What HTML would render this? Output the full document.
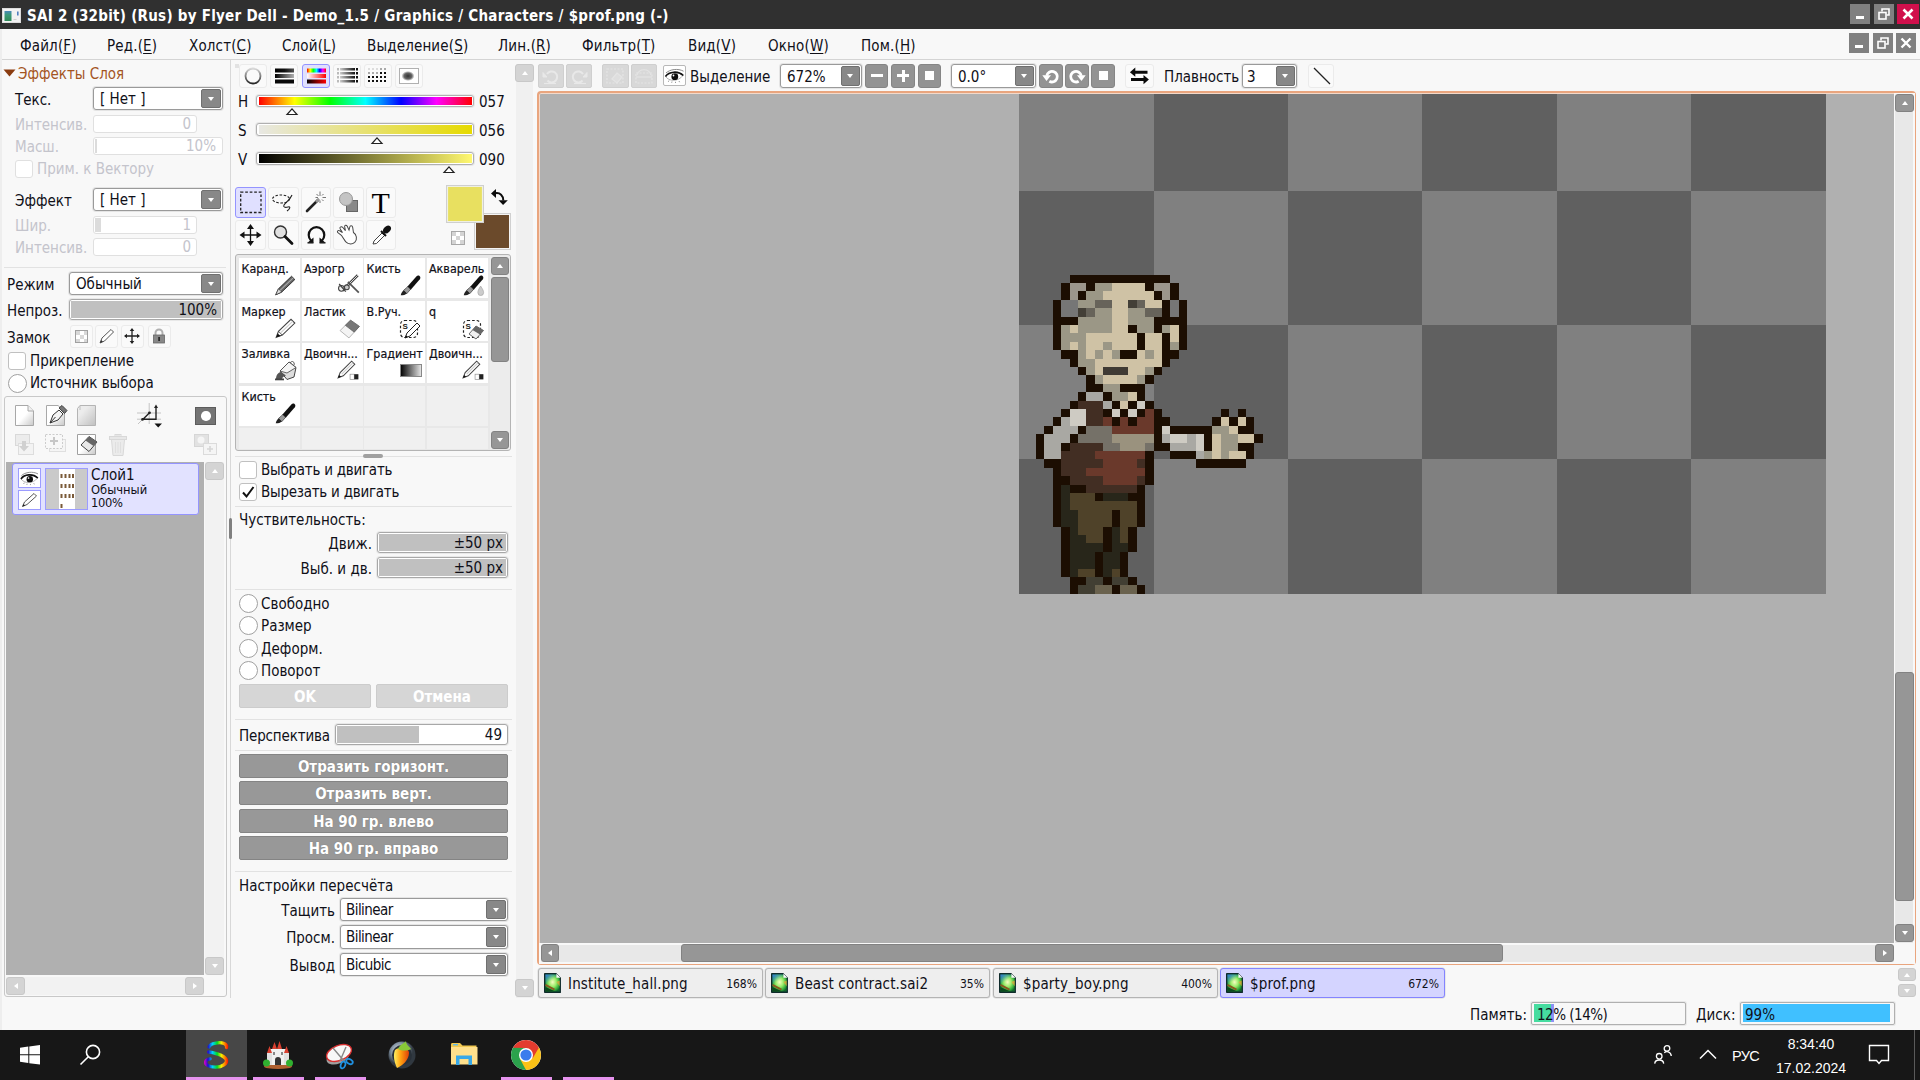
<!DOCTYPE html>
<html lang="ru"><head><meta charset="utf-8"><title>SAI 2</title>
<style>
*{box-sizing:border-box;margin:0;padding:0}
html,body{width:1920px;height:1080px;overflow:hidden;background:#f8f8f8}
body{position:relative;font-family:"DejaVu Sans Condensed","DejaVu Sans","Liberation Sans",sans-serif;font-stretch:condensed;font-size:15px;color:#101018;line-height:1}
.a{position:absolute}
.t{position:absolute;white-space:nowrap;line-height:18px;height:18px}
.r{text-align:right}
.m{letter-spacing:0.15px}
.dis{color:#c4c4cc}
.sm{font-size:12.8px;line-height:14px;height:14px}
.dd{position:absolute;background:#fff;border:1px solid #9a9a9a;border-radius:3px;box-shadow:0 0 0 1px #e4e4e4}
.ddb{position:absolute;background:#888;border:1px solid #707070;border-radius:2px}
.ddb:after{content:"";position:absolute;left:50%;top:50%;margin:-2px 0 0 -3.5px;border:3.5px solid transparent;border-top:4.500px solid #fff;border-bottom:0}
.sl{position:absolute;background:#fff;border:1px solid #a8a8a8;border-radius:3px;box-shadow:0 0 0 1px #e8e8e8}
.sld{position:absolute;background:#fff;border:1px solid #e0e0e0;border-radius:3px}
.fill{position:absolute;background:#c0c0c0}
.hl{position:absolute;height:1px;background:#e2e2e2}
.cb{position:absolute;width:18px;height:18px;background:#fff;border:1px solid #c0c0c0;border-radius:3px}
.rb{position:absolute;width:19px;height:19px;background:#fff;border:1px solid #a0a0a0;border-radius:50%}
.lb{position:absolute;border:1px solid #ebebeb;border-radius:3px;background:#fafafa}
.gb{position:absolute;background:#939393;border:1px solid #858585;border-radius:3px}
.db{position:absolute;background:#d8d8d8;border:1px solid #cfcfcf;border-radius:2px}
.btn{position:absolute;background:#989898;border:1px solid #848484;border-radius:2px;color:#fff;font-weight:bold;text-align:center;font-size:15px;line-height:24px;text-shadow:0 0 1px #707070}
.sbb{position:absolute;background:#d4d4d4;border:1px solid #c8c8c8;border-radius:3px}
.sbd{position:absolute;background:#969696;border:1px solid #828282;border-radius:3px}
.sbb,.sbd{display:flex;align-items:center;justify-content:center}
.tri{width:0;height:0;border:3.5px solid transparent}
.tu{border-bottom:4px solid #fff;border-top:0}
.td{border-top:4px solid #fff;border-bottom:0}
.tl{border-right:4px solid #fff;border-left:0}
.tr{border-left:4px solid #fff;border-right:0}
.cell{position:absolute;width:61px;height:40px;background:#fff;font-size:12.4px}
.cell span{position:absolute;left:2.5px;top:4px;line-height:14px;white-space:nowrap;-webkit-text-stroke:0.2px #101018}
.cell svg{position:absolute;right:2px;bottom:2px}
.ecell{position:absolute;width:61px;background:#f0f0f0}
.tab{position:absolute;top:968px;height:30px;width:225px;background:#eeeeee;border:1px solid #b4b4b4;border-radius:3px;box-shadow:0 0 0 0.5px #d8d8d8}
.tab .n{position:absolute;left:29px;top:6px;line-height:18px;letter-spacing:0.15px}
.tab .p{position:absolute;right:5px;top:8px;font-size:12px;line-height:14px}
.tab svg{position:absolute;left:5px;top:4px}
u{text-decoration:underline;text-underline-offset:2px}
</style></head><body>
<!-- title bar -->
<div class="a" style="left:0;top:0;width:1920px;height:28.700px;background:#303030;z-index:2"></div>
<svg class="a" style="left:2px;top:8px;z-index:3" width="19" height="15" viewBox="0 0 19 15"><defs><linearGradient id="ti" x1="0" y1="0" x2="0" y2="1"><stop offset="0" stop-color="#4a88b8"/><stop offset="0.400" stop-color="#3a9a78"/><stop offset="1" stop-color="#2f8a58"/></linearGradient></defs><rect x="0.500" y="0.500" width="18" height="14" fill="#f2f2f2" stroke="#dcdcdc"/><rect x="2.500" y="3" width="7" height="10" fill="url(#ti)"/><rect x="15" y="3.500" width="1.600" height="4" fill="#5080c0"/><rect x="11.500" y="11" width="3" height="1" fill="#d0d0d0"/></svg>
<div class="t" id="ttl" style="left:27px;top:5.500px;z-index:3;color:#fff;font-weight:bold;font-size:15px;line-height:20px;height:20px;letter-spacing:0.26px">SAI 2 (32bit) (Rus) by Flyer Dell - Demo_1.5 / Graphics / Characters / $prof.png (-)</div>
<div class="a" style="left:1850px;top:4px;width:20px;height:20px;background:#808080;z-index:3"><div class="a" style="left:6px;top:12px;width:8px;height:3px;background:#fff"></div></div>
<div class="a" style="left:1874px;top:4px;width:20px;height:20px;background:#808080;z-index:3"><svg class="a" style="left:4px;top:4px" width="12" height="12" viewBox="0 0 12 12" fill="none" stroke="#fff" stroke-width="1.6"><path d="M4 3.5V1H11V7H8.5"/><rect x="1" y="4.5" width="7" height="6.5"/></svg></div>
<div class="a" style="left:1897px;top:4px;width:22px;height:20px;background:#d0104c;z-index:3"><svg class="a" style="left:5px;top:4px" width="12" height="12" viewBox="0 0 12 12" stroke="#fff" stroke-width="2.6"><path d="M1.5 1.5L10.5 10.5M10.5 1.5L1.5 10.5"/></svg></div>
<!-- menu bar -->
<div class="a" style="left:0;top:28px;width:1920px;height:32px;background:#f8f8f8;border-bottom:1px solid #d4d4d4"></div>
<div class="a" style="left:0;top:28px;width:2px;height:1002px;background:#eeeeee"></div>
<div class="t m" style="top:37px;left:20px">Файл(<u>F</u>)</div>
<div class="t m" style="top:37px;left:107px">Ред.(<u>E</u>)</div>
<div class="t m" style="top:37px;left:189px">Холст(<u>C</u>)</div>
<div class="t m" style="top:37px;left:282px">Слой(<u>L</u>)</div>
<div class="t m" style="top:37px;left:367px">Выделение(<u>S</u>)</div>
<div class="t m" style="top:37px;left:498px">Лин.(<u>R</u>)</div>
<div class="t m" style="top:37px;left:582px">Фильтр(<u>T</u>)</div>
<div class="t m" style="top:37px;left:688px">Вид(<u>V</u>)</div>
<div class="t m" style="top:37px;left:768px">Окно(<u>W</u>)</div>
<div class="t m" style="top:37px;left:861px">Пом.(<u>H</u>)</div>
<div class="a" style="left:1849px;top:33px;width:20px;height:20px;background:#808080"><div class="a" style="left:6px;top:12px;width:8px;height:3px;background:#fff"></div></div>
<div class="a" style="left:1873px;top:33px;width:20px;height:20px;background:#808080"><svg class="a" style="left:4px;top:4px" width="12" height="12" viewBox="0 0 12 12" fill="none" stroke="#fff" stroke-width="1.6"><path d="M4 3.5V1H11V7H8.5"/><rect x="1" y="4.5" width="7" height="6.5"/></svg></div>
<div class="a" style="left:1896px;top:33px;width:20px;height:20px;background:#808080"><svg class="a" style="left:4px;top:4px" width="12" height="12" viewBox="0 0 12 12" stroke="#fff" stroke-width="2.4"><path d="M1.5 1.5L10.5 10.5M10.5 1.5L1.5 10.5"/></svg></div>
<!-- left panel -->
<div class="a" style="left:230px;top:60px;width:1px;height:938px;background:#d8d8d8"></div>
<div class="a" style="left:229px;top:518px;width:3px;height:21px;background:#808080;border-radius:1.5px"></div>
<svg class="a" style="left:3px;top:69px" width="13" height="8" viewBox="0 0 13 8"><path d="M0.5 0.5H12.5L6.5 7.5Z" fill="#8a3c10"/></svg>
<div class="t" style="left:18px;top:65px;color:#a4551f">Эффекты Слоя</div>
<div class="t" style="left:15px;top:91px">Текс.</div>
<div class="dd" style="left:93px;top:87px;width:130px;height:23px"></div><div class="ddb" style="left:201px;top:89px;width:20px;height:19px"></div>
<div class="t" style="left:100px;top:90px">[ Нет ]</div>
<div class="t dis" style="left:15px;top:116px">Интенсив.</div>
<div class="sld" style="left:93px;top:115px;width:104px;height:18px"></div>
<div class="t dis r" style="left:140px;width:51px;top:115px">0</div>
<div class="t dis" style="left:15px;top:138px">Масш.</div>
<div class="sld" style="left:93px;top:137px;width:130px;height:18px"></div><div class="fill" style="left:95px;top:139px;width:2px;height:14px;background:#dcdcdc"></div>
<div class="t dis r" style="left:160px;width:56px;top:137px">10%</div>
<div class="cb" style="left:15px;top:160px;border-color:#e0e0e0"></div>
<div class="t dis" style="left:37px;top:160px">Прим. к Вектору</div>
<div class="t" style="left:15px;top:192px">Эффект</div>
<div class="dd" style="left:93px;top:188px;width:130px;height:23px"></div><div class="ddb" style="left:201px;top:190px;width:20px;height:19px"></div>
<div class="t" style="left:100px;top:191px">[ Нет ]</div>
<div class="t dis" style="left:15px;top:217px">Шир.</div>
<div class="sld" style="left:93px;top:216px;width:104px;height:18px"></div><div class="fill" style="left:95px;top:218px;width:6px;height:14px;background:#dcdcdc"></div>
<div class="t dis r" style="left:140px;width:51px;top:216px">1</div>
<div class="t dis" style="left:15px;top:239px">Интенсив.</div>
<div class="sld" style="left:93px;top:238px;width:104px;height:18px"></div>
<div class="t dis r" style="left:140px;width:51px;top:238px">0</div>
<div class="hl" style="left:4px;top:267px;width:222px"></div>
<div class="t" style="left:7px;top:276px">Режим</div>
<div class="dd" style="left:69px;top:272px;width:154px;height:23px"></div><div class="ddb" style="left:201px;top:274px;width:20px;height:19px"></div>
<div class="t" style="left:76px;top:275px">Обычный</div>
<div class="t" style="left:7px;top:302px">Непроз.</div>
<div class="sl" style="left:69px;top:299px;width:154px;height:21px"></div><div class="fill" style="left:71px;top:301px;width:150px;height:17px"></div>
<div class="t r" style="left:150px;width:67px;top:301px">100%</div>
<div class="t" style="left:7px;top:329px">Замок</div>
<div class="lb" style="left:69.5px;top:324.7px;width:23px;height:23px"><svg width="20" height="20" viewBox="0 0 20 20"><rect x="4.5" y="4.5" width="12" height="12" fill="#fff" stroke="#a0a0a0"/><rect x="5" y="5" width="4" height="4" fill="#d8d8d8"/><rect x="13" y="5" width="3" height="4" fill="#d8d8d8"/><rect x="9" y="9" width="4" height="4" fill="#d8d8d8"/><rect x="5" y="13" width="4" height="3" fill="#d8d8d8"/><rect x="13" y="13" width="3" height="3" fill="#d8d8d8"/></svg></div>
<div class="lb" style="left:95.3px;top:324.7px;width:23px;height:23px"><svg width="20" height="20" viewBox="0 0 20 20"><path d="M4 17L6 12L15 3.5L17.5 6L8.5 15Z" fill="#fff" stroke="#555" stroke-width="1"/><path d="M4 17L5.2 14L7 15.8Z" fill="#333"/></svg></div>
<div class="lb" style="left:121.3px;top:324.7px;width:23px;height:23px"><svg width="20" height="20" viewBox="0 0 20 20" stroke="#222" stroke-width="1.3" fill="#222"><path d="M10 3V17M3 10H17" fill="none"/><path d="M10 2L12.3 5H7.7ZM10 18L12.3 15H7.7ZM2 10L5 7.7V12.3ZM18 10L15 7.7V12.3Z" stroke="none"/></svg></div>
<div class="lb" style="left:147.5px;top:324.7px;width:23px;height:23px"><svg width="20" height="20" viewBox="0 0 20 20"><path d="M6.5 9V7a3.5 3.5 0 0 1 7 0V9" fill="none" stroke="#b0b0b0" stroke-width="2"/><rect x="4.5" y="9" width="11" height="8" fill="#888" stroke="#666" stroke-width="0.8"/><rect x="9.3" y="11" width="1.6" height="4" fill="#222"/></svg></div>
<div class="cb" style="left:8px;top:352px"></div>
<div class="t" style="left:30px;top:352px">Прикрепление</div>
<div class="rb" style="left:7.5px;top:374px"></div>
<div class="t" style="left:30px;top:374px">Источник выбора</div>
<!-- layer panel -->
<div class="a" style="left:4px;top:396px;width:223px;height:601px;border:1px solid #c8c8c8;border-radius:3px;background:#f8f8f8"></div>
<svg class="a" style="left:14px;top:404px" width="22" height="24" viewBox="0 0 22 24"><defs><linearGradient id="pg" x1="0" y1="0" x2="1" y2="1"><stop offset="0.5" stop-color="#fff"/><stop offset="1" stop-color="#c8c8c8"/></linearGradient></defs><path d="M1.5 1.5H14L19.5 7V21.5H1.5Z" fill="url(#pg)" stroke="#a8a8a8"/><path d="M14 1.5V7H19.5" fill="#f0f0f0" stroke="#a8a8a8"/></svg>
<svg class="a" style="left:45px;top:404px" width="24" height="24" viewBox="0 0 24 24"><path d="M1.5 1.5H13L19.5 7V21.5H1.5Z" fill="url(#pg)" stroke="#a8a8a8"/><path d="M5 19L8 11L14 6L18 10L13 16Z" fill="#f4f4f4" stroke="#333" stroke-width="1"/><path d="M5 19L10.5 13" stroke="#333" stroke-width="1"/><path d="M14 4L17 1.5L22 6.5L19.5 9.5Z" fill="#777" stroke="#444"/></svg>
<svg class="a" style="left:76px;top:404px" width="22" height="24" viewBox="0 0 22 24"><defs><linearGradient id="fg" x1="0" y1="0" x2="1" y2="1"><stop offset="0.3" stop-color="#ececec"/><stop offset="1" stop-color="#c0c0c0"/></linearGradient></defs><path d="M1.5 4.5L4 1.5H19.5V21.5H1.5Z" fill="url(#fg)" stroke="#b4b4b4"/><path d="M4 1.5V6" stroke="#c0c0c0"/></svg>
<svg class="a" style="left:136px;top:402px" width="28" height="28" viewBox="0 0 28 28"><path d="M1 11H25M1 17.200H25M13.200 1V22M2 22L8 16" stroke="#c4c4c4" stroke-width="1" fill="none"/><path d="M6.500 17.200H20V4.500M6.500 17.700L13.500 10.800" stroke="#222" stroke-width="1.400" fill="none"/><path d="M20 2.500L22 6H18Z" fill="#222"/><path d="M18.500 21.500H26L22.200 25.500Z" fill="#111"/><circle cx="13.500" cy="10.800" r="1.400" fill="#222"/><circle cx="6.500" cy="17.400" r="1.300" fill="#222"/></svg>
<div class="a" style="left:195px;top:406.500px;width:21px;height:18.500px;background:#747474;border:1px solid #5c5c5c"><div class="a" style="left:5.200px;top:3.500px;width:9.500px;height:9.500px;border-radius:50%;background:#fff"></div></div>
<!-- row 2 icons (disabled) -->
<svg class="a" style="left:14px;top:433px" width="22" height="24" viewBox="0 0 22 24" opacity="0.55"><rect x="1.5" y="1.5" width="14" height="11" fill="#e4e4e4" stroke="#c0c0c0"/><rect x="4.5" y="10.5" width="15" height="11" fill="#f0f0f0" stroke="#c8c8c8"/><path d="M8 8H12V13H15L10 18.5L5 13H8Z" fill="#b0b0b0"/></svg>
<svg class="a" style="left:44px;top:433px" width="24" height="24" viewBox="0 0 24 24" opacity="0.6"><rect x="5.5" y="6.5" width="16" height="12" fill="#f4f4f4" stroke="#d0d0d0"/><rect x="1.5" y="1.5" width="17" height="14" fill="#f8f8f8" stroke="#b0b0b0" stroke-dasharray="2 1.5"/><path d="M10 4V12M6 8H14" stroke="#a8a8a8" stroke-width="2"/></svg>
<svg class="a" style="left:76px;top:433px" width="24" height="24" viewBox="0 0 24 24"><path d="M1.5 1.5H19.5V21.5H1.5Z" fill="url(#pg)" stroke="#a0a0a0"/><path d="M5 12L13 3.5L21 9L13 18.5Z" fill="#e8e8e8" stroke="#444"/><path d="M13 3.5L21 9L17.5 13L9.5 7.5Z" fill="#666"/></svg>
<svg class="a" style="left:108px;top:433px" width="20" height="24" viewBox="0 0 20 24" opacity="0.6"><path d="M3.5 6.5H16.5L15 22.5H5Z" fill="#e4e4e4" stroke="#c4c4c4"/><rect x="1.5" y="3.5" width="17" height="3" fill="#dcdcdc" stroke="#c4c4c4"/><rect x="7" y="1.500" width="6" height="2" fill="#dcdcdc" stroke="#c4c4c4"/><path d="M7.500 9V20M10 9V20M12.500 9V20" stroke="#cfcfcf"/></svg>
<svg class="a" style="left:193px;top:433px" width="26" height="24" viewBox="0 0 26 24" opacity="0.6"><rect x="1.500" y="1.500" width="14" height="12" fill="#d4d4d4" stroke="#c0c0c0"/><circle cx="8" cy="7" r="3.5" fill="#f4f4f4"/><rect x="10.5" y="10.5" width="13" height="11" fill="#f4f4f4" stroke="#c8c8c8"/><path d="M17 13V19M14 16H20" stroke="#c0c0c0" stroke-width="1.6"/></svg>
<!-- layer list -->
<div class="a" style="left:6px;top:462px;width:198px;height:513px;background:#b0b0b0"></div>
<div class="a" style="left:12px;top:463px;width:187px;height:52px;background:#e2e2ff;border:1px solid #9494ff;border-radius:3px"></div>
<div class="a" style="left:18px;top:468px;width:23px;height:20px;background:#fff;border:1px solid #9c9cff"><svg width="21" height="18" viewBox="0 0 21 19"><path d="M1.500 10.500C5 15.500 14 16 19 9.500C14 5 5 5.500 1.500 10.500Z" fill="#fff" stroke="#666" stroke-width="0.500"/><circle cx="10.800" cy="10.700" r="3.400" fill="#0c0c0c"/><circle cx="9.500" cy="9.500" r="0.900" fill="#fff"/><path d="M1.500 10.500C5 5.500 14 4.500 19.300 9.500" stroke="#111" stroke-width="1.700" fill="none"/><path d="M2 7C6 3.200 14 2.200 19.500 5.200" stroke="#8a8a8a" stroke-width="1" fill="none"/><path d="M5 14.500L4.300 15.800M8 15.500L7.700 16.800M11.500 15.800V17M15 15L15.600 16.200" stroke="#555" stroke-width="0.600"/></svg></div>
<div class="a" style="left:18px;top:490px;width:23px;height:20px;background:#fff;border:1px solid #9c9cff"><svg width="21" height="18" viewBox="0 0 21 18"><path d="M3.500 15.500L5.500 11L15 2.500L17.500 5L8 13.500Z" fill="#fff" stroke="#444" stroke-width="0.9"/><path d="M3.500 15.500L4.500 13L6.300 14.600Z" fill="#222"/></svg></div>
<div class="a" style="left:45px;top:468px;width:43px;height:42px;background:#cacaca;border:1px solid #9c9cff"><div class="a" style="left:13px;top:0;width:16px;height:40px;background:#fff"></div>
<svg class="a" style="left:13px;top:0" width="16" height="40" viewBox="0 0 16 40" fill="#7a5a38"><rect x="1.500" y="5" width="2" height="4"/><rect x="5.500" y="5" width="2" height="4"/><rect x="9.500" y="5" width="2" height="4"/><rect x="13" y="5" width="2" height="4"/><rect x="1.500" y="15" width="2" height="4"/><rect x="5.500" y="15" width="2" height="4"/><rect x="9.500" y="15" width="2" height="4"/><rect x="13" y="15" width="2" height="4"/><rect x="1.500" y="25" width="2" height="4"/><rect x="5.500" y="25" width="2" height="4"/><rect x="9.500" y="25" width="2" height="4"/><rect x="13" y="25" width="2" height="4"/><rect x="1.500" y="35" width="2" height="4"/></svg></div>
<div class="t" style="left:91px;top:466px">Слой1</div>
<div class="t sm" style="left:91px;top:483px">Обычный</div>
<div class="t sm" style="left:91px;top:496px;letter-spacing:-0.3px">100%</div>
<!-- layer scrollbars -->
<div class="a" style="left:205px;top:462px;width:19px;height:513px;background:#f2f2f2"></div>
<div class="sbb" style="left:205px;top:462px;width:19px;height:18px"><div class="tri tu"></div></div>
<div class="sbb" style="left:205px;top:957px;width:19px;height:18px"><div class="tri td"></div></div>
<div class="a" style="left:6px;top:977px;width:198px;height:18px;background:#f2f2f2"></div>
<div class="sbb" style="left:6px;top:977px;width:19px;height:18px"><div class="tri tl"></div></div>
<div class="sbb" style="left:185px;top:977px;width:19px;height:18px"><div class="tri tr"></div></div>
<!-- color mode buttons -->
<div class="a" style="left:235px;top:64px;width:4px;height:4px;background:#e2e2e2"></div>
<div class="lb" style="left:239px;top:64px;width:28px;height:24px"><svg width="26" height="22" viewBox="0 0 26 22"><defs><linearGradient id="rg" x1="0" y1="0" x2="0" y2="1"><stop offset="0" stop-color="#d8d8d8"/><stop offset="1" stop-color="#282828"/></linearGradient></defs><circle cx="13" cy="11" r="7.500" fill="#fafafa" stroke="url(#rg)" stroke-width="1.800"/></svg></div>
<div class="lb" style="left:270px;top:64px;width:28px;height:24px"><svg width="26" height="22" viewBox="0 0 26 22"><defs><linearGradient id="bw" x1="0" y1="0" x2="1" y2="0"><stop offset="0" stop-color="#000"/><stop offset="0.500" stop-color="#111"/><stop offset="1" stop-color="#505050"/></linearGradient><linearGradient id="bw2" x1="0" y1="0" x2="1" y2="0"><stop offset="0" stop-color="#000"/><stop offset="1" stop-color="#b0b0b0"/></linearGradient></defs><rect x="4" y="3.500" width="19" height="4" fill="url(#bw)"/><rect x="4" y="9" width="19" height="4" fill="url(#bw2)"/><rect x="4" y="14.500" width="19" height="4" fill="#080808"/></svg></div>
<div class="lb" style="left:302px;top:64px;width:28px;height:24px;background:#e0e0ff;border-color:#9494ff"><svg width="26" height="22" viewBox="0 0 26 22"><defs><linearGradient id="hu" x1="0" y1="0" x2="1" y2="0"><stop offset="0" stop-color="#f00"/><stop offset="0.170" stop-color="#ff0"/><stop offset="0.330" stop-color="#0f0"/><stop offset="0.500" stop-color="#0ff"/><stop offset="0.670" stop-color="#00f"/><stop offset="0.830" stop-color="#f0f"/><stop offset="1" stop-color="#f00"/></linearGradient><linearGradient id="wr" x1="0" y1="0" x2="1" y2="0"><stop offset="0" stop-color="#fff"/><stop offset="1" stop-color="#f00"/></linearGradient><linearGradient id="kr" x1="0" y1="0" x2="1" y2="0"><stop offset="0" stop-color="#000"/><stop offset="1" stop-color="#f00"/></linearGradient></defs><rect x="4" y="3.500" width="19" height="4" fill="url(#hu)"/><rect x="4" y="9" width="19" height="4" fill="url(#wr)"/><rect x="4" y="14.500" width="19" height="4" fill="url(#kr)"/></svg></div>
<div class="lb" style="left:333px;top:64px;width:28px;height:24px"><svg width="26" height="22" viewBox="0 0 26 22"><defs><linearGradient id="gk" x1="0" y1="0" x2="1" y2="0"><stop offset="0" stop-color="#ccc"/><stop offset="1" stop-color="#111"/></linearGradient></defs><g fill="url(#gk)"><rect x="6" y="3" width="15" height="2.500"/><rect x="6" y="7" width="15" height="2.500"/><rect x="6" y="11" width="15" height="2.500"/><rect x="6" y="15" width="15" height="2.500"/></g><g fill="#bbb"><rect x="3" y="3" width="2" height="2.500"/><rect x="3" y="7" width="2" height="2.500"/><rect x="3" y="11" width="2" height="2.500"/><rect x="3" y="15" width="2" height="2.500"/></g><g fill="#111"><rect x="22" y="3" width="2" height="2.500"/><rect x="22" y="7" width="2" height="2.500"/><rect x="22" y="11" width="2" height="2.500"/><rect x="22" y="15" width="2" height="2.500"/></g></svg></div>
<div class="lb" style="left:364px;top:64px;width:28px;height:24px"><svg width="26" height="22" viewBox="0 0 26 22"><g fill="#ddd"><rect x="3" y="3" width="2" height="2"/><rect x="7" y="3" width="2" height="2"/><rect x="11" y="3" width="2" height="2"/></g><g fill="#aaa"><rect x="15" y="3" width="2" height="2"/><rect x="19" y="3" width="2" height="2"/><rect x="3" y="7" width="2" height="2"/><rect x="7" y="7" width="2" height="2"/><rect x="11" y="7" width="2" height="2"/></g><g fill="#111"><rect x="15" y="7" width="2" height="2"/><rect x="19" y="7" width="2" height="2"/><rect x="3" y="11" width="2" height="2"/><rect x="7" y="11" width="2" height="2"/><rect x="11" y="11" width="2" height="2"/><rect x="15" y="11" width="2" height="2"/><rect x="19" y="11" width="2" height="2"/><rect x="3" y="15" width="2" height="2"/><rect x="7" y="15" width="2" height="2"/><rect x="11" y="15" width="2" height="2"/><rect x="15" y="15" width="2" height="2"/><rect x="19" y="15" width="2" height="2"/></g></svg></div>
<div class="lb" style="left:395px;top:64px;width:28px;height:24px"><svg width="26" height="22" viewBox="0 0 26 22"><defs><radialGradient id="sm"><stop offset="0" stop-color="#333"/><stop offset="0.600" stop-color="#666"/><stop offset="1" stop-color="#fff"/></radialGradient></defs><rect x="3.500" y="3.500" width="19" height="15" fill="#fff" stroke="#b0b0b0"/><ellipse cx="12" cy="11" rx="6.500" ry="5" fill="url(#sm)"/></svg></div>
<!-- HSV -->
<div class="t" style="left:238px;top:93px">H</div>
<div class="sl" style="left:256.300px;top:95px;width:217.700px;height:12px;border-color:#b0b0b0"></div>
<div class="a" style="left:259px;top:97px;width:213px;height:8px;background:linear-gradient(90deg,#f00 0%,#ff0 16.7%,#0f0 33.300%,#0ff 50%,#00f 66.700%,#f0f 83.300%,#f00 100%)"></div>
<svg class="a" style="left:285px;top:107px" width="14" height="9" viewBox="0 0 14 9"><path d="M7 1.800L12 7.500H2Z" fill="#fff" stroke="#222" stroke-width="1.200"/></svg>
<div class="t" style="left:479px;top:93px">057</div>
<div class="t" style="left:238px;top:122px">S</div>
<div class="sl" style="left:256.300px;top:123px;width:217.700px;height:13px;border-color:#b0b0b0"></div>
<div class="a" style="left:259px;top:125px;width:213px;height:9px;background:linear-gradient(90deg,#e8e8e4,#e6da00)"></div>
<svg class="a" style="left:370px;top:136px" width="14" height="9" viewBox="0 0 14 9"><path d="M7 1.800L12 7.500H2Z" fill="#fff" stroke="#222" stroke-width="1.200"/></svg>
<div class="t" style="left:479px;top:122px">056</div>
<div class="t" style="left:238px;top:151px">V</div>
<div class="sl" style="left:256.300px;top:152px;width:217.700px;height:13px;border-color:#b0b0b0"></div>
<div class="a" style="left:259px;top:154px;width:213px;height:9px;background:linear-gradient(90deg,#000,#fff870)"></div>
<svg class="a" style="left:442px;top:165px" width="14" height="9" viewBox="0 0 14 9"><path d="M7 1.800L12 7.500H2Z" fill="#fff" stroke="#222" stroke-width="1.200"/></svg>
<div class="t" style="left:479px;top:151px">090</div>
<!-- tools -->
<div class="lb" style="left:235px;top:187px;width:30.500px;height:31px;background:#e0e0ff;border-color:#9494ff"><svg width="29" height="29" viewBox="0 0 29 29"><rect x="4.700" y="4.200" width="20.300" height="20.300" fill="none" stroke="#222" stroke-width="1.300" stroke-dasharray="2.700 1.800"/></svg></div>
<div class="lb" style="left:268px;top:187px;width:30.500px;height:31px"><svg width="29" height="29" viewBox="0 0 29 29" fill="none" stroke="#222" stroke-width="1.100"><ellipse cx="12" cy="11" rx="8.500" ry="4" stroke-dasharray="2.500 1.600"/><path d="M23 7C21 12 17 14 15 17C14 19 16 20 19 19C22 18 21 21 18 23" /></svg></div>
<div class="lb" style="left:300.5px;top:187px;width:30.500px;height:31px"><svg width="29" height="29" viewBox="0 0 29 29"><path d="M5 23L16 12" stroke="#222" stroke-width="2.600" stroke-linecap="round"/><path d="M14 14L17 11" stroke="#999" stroke-width="2.600"/><path d="M18 3.500V8M18 12.500V15M13.500 9.500H16M20.500 9.500H24M14.500 6L16.500 8M21.500 6L20 7.500M21.500 13L20 11.500" stroke="#777" stroke-width="1"/></svg></div>
<div class="lb" style="left:333px;top:187px;width:30.500px;height:31px"><svg width="29" height="29" viewBox="0 0 29 29"><rect x="12.500" y="12.500" width="11" height="11" fill="#888" stroke="#666"/><circle cx="12" cy="11" r="6.500" fill="#c4c4c4" stroke="#999"/></svg></div>
<div class="lb" style="left:365.5px;top:187px;width:30.500px;height:31px"><div class="a" style="left:0;top:-1px;width:28.500px;text-align:center;font:30px/31px 'Liberation Serif','DejaVu Serif',serif;color:#000">T</div></div>
<div class="lb" style="left:235px;top:219.500px;width:30.500px;height:30.500px"><svg width="29" height="28" viewBox="0 0 29 28" fill="#111" stroke="#111"><path d="M14.500 5V23M5.500 14H23.500" stroke-width="1.300" fill="none"/><path d="M14.500 3L18 8H11ZM14.500 25L18 20H11ZM3.500 14L8.500 10.500V17.500ZM25.500 14L20.500 10.500V17.500Z" stroke="none"/></svg></div>
<div class="lb" style="left:268px;top:219.500px;width:30.500px;height:30.500px"><svg width="29" height="28" viewBox="0 0 29 28"><circle cx="11.500" cy="11" r="6" fill="#e0e0e0" stroke="#333" stroke-width="1.400"/><path d="M16 15.500L23 22.500" stroke="#111" stroke-width="2.800" stroke-linecap="round"/></svg></div>
<div class="lb" style="left:300.5px;top:219.500px;width:30.500px;height:30.500px"><svg width="29" height="28" viewBox="0 0 29 28"><path d="M9 19.500A7.800 7.800 0 1 1 20 19.500" fill="none" stroke="#111" stroke-width="2.200"/><path d="M5.500 21.800H11.500V16.500Z" fill="#111"/><path d="M23.500 21.800H17.500V16.500Z" fill="#111"/><path d="M5.500 21.800H11.500M23.500 21.800H17.500" stroke="#111" stroke-width="1.300"/></svg></div>
<div class="lb" style="left:333px;top:219.500px;width:30.500px;height:30.500px"><svg width="29" height="28" viewBox="0 0 29 28"><path d="M8 12L6 8C5 6 7 5 8.500 7L10 9.500L9.500 5C9.500 3 12 3 12.500 5L13.500 9L14.500 5C15 3.500 17 4 17 6L17 10L19 7.500C20 6 22 7 21.500 9L20 14C22 17 21 22 17 23.500C13 24.500 10 22 9 19Z" fill="#fff" stroke="#444" stroke-width="1" transform="rotate(-25 14 14)"/></svg></div>
<div class="lb" style="left:365.5px;top:219.500px;width:30.500px;height:30.500px"><svg width="29" height="28" viewBox="0 0 29 28"><path d="M6 23L7 20L15 12L17.500 14.500L9.500 22.500Z" fill="#fff" stroke="#444" stroke-width="1"/><path d="M14 10L19 15" stroke="#111" stroke-width="2"/><ellipse cx="20" cy="8.500" rx="4.500" ry="3.200" transform="rotate(-45 20 8.500)" fill="#111"/></svg></div>
<!-- colors -->
<div class="a" style="left:474px;top:213px;width:37px;height:37px;background:#6b4a2b;border:2px solid #f4f4f4;outline:1px solid #d0d0d0;outline-offset:-1px"></div>
<div class="a" style="left:446.300px;top:185.300px;width:37.500px;height:37.500px;background:#e8e060;border:1.500px solid #cfcfcf;box-shadow:inset 0 0 0 1.100px #f0f0e2"></div>
<svg class="a" style="left:489px;top:188px" width="20" height="20" viewBox="0 0 20 20"><path d="M6.500 5.200C11 4.500 14.300 7.500 14.300 12.500" fill="none" stroke="#0c0c0c" stroke-width="2"/><path d="M2 5.400L7 0.900V9.900Z" fill="#0c0c0c"/><path d="M14.100 17.100L9.500 12.200H18.800Z" fill="#0c0c0c"/></svg>
<svg class="a" style="left:450px;top:230px" width="16" height="16" viewBox="0 0 16 16"><rect x="1.500" y="1.500" width="13" height="13" fill="#fff" stroke="#a8a8a8"/><rect x="2" y="2" width="4" height="4" fill="#d4d4d4"/><rect x="10" y="2" width="4" height="4" fill="#d4d4d4"/><rect x="6" y="6" width="4" height="4" fill="#d4d4d4"/><rect x="2" y="10" width="4" height="4" fill="#d4d4d4"/><rect x="10" y="10" width="4" height="4" fill="#d4d4d4"/></svg>
<!-- brush list -->
<div class="a" style="left:235px;top:254px;width:276px;height:197px;border:1px solid #b4b4b4;border-radius:3px;background:#e8e8e8;overflow:hidden"></div>
<div class="cell" style="left:239px;top:258px"><span>Каранд.</span><svg width="24" height="24" viewBox="0 0 22 22" style="right:3px;bottom:1px"><path d="M2.500 20L5 14.500L17 3L20 6L8 17.500Z" fill="#666" stroke="#222" stroke-width="0.800"/><path d="M5 14.500L8 17.500L2.500 20Z" fill="#ddd" stroke="#333" stroke-width="0.600"/><path d="M6.500 16L18.500 4.500" stroke="#aaa" stroke-width="1"/></svg></div>
<div class="cell" style="left:301.5px;top:258px"><span>Аэрогр</span><svg width="24" height="24" viewBox="0 0 22 22" style="right:2px;bottom:2px"><path d="M5 17L19 3" stroke="#444" stroke-width="2.400"/><path d="M5 17L19 3" stroke="#ddd" stroke-width="0.900"/><path d="M10 9L20 19" stroke="#555" stroke-width="1.600"/><circle cx="4" cy="15" r="2.600" fill="#eee" stroke="#444"/><circle cx="9" cy="14" r="2.200" fill="#ccc" stroke="#444"/><path d="M2 11L8 18" stroke="#444" stroke-width="1.200"/></svg></div>
<div class="cell" style="left:364px;top:258px"><span>Кисть</span><svg width="24" height="24" viewBox="0 0 22 22" style="right:3px;bottom:1px"><path d="M8.500 12.500L17 3C19 1.200 21.600 3.800 20 5.800L11.500 15.500Z" fill="#111"/><path d="M5 16L9 12.500L11.500 15L8 19Z" fill="#999" stroke="#444" stroke-width="0.700"/><path d="M2.500 20.500C3 18 4 16.500 5.500 16L8 18.500C7 20 5 20.500 2.500 20.500Z" fill="#222"/></svg></div>
<div class="cell" style="left:426.5px;top:258px"><span>Акварель</span><svg width="24" height="24" viewBox="0 0 22 22" style="right:3px;bottom:1px"><path d="M8.500 12.500L17 3C19 1.200 21.600 3.800 20 5.800L11.500 15.500Z" fill="#111"/><path d="M5 16L9 12.500L11.500 15L8 19Z" fill="#999" stroke="#444" stroke-width="0.700"/><path d="M2.500 20.500C3 18 4 16.500 5.500 16L8 18.500C7 20 5 20.500 2.500 20.500Z" fill="#222"/><path d="M18 12C16 15 15.500 16.500 15.500 18A2.600 2.600 0 0 0 20.700 18C20.700 16.500 20 15 18 12Z" fill="#ccc" stroke="#aaa" stroke-width="0.700"/></svg></div>
<div class="cell" style="left:239px;top:300.5px"><span>Маркер</span><svg width="24" height="24" viewBox="0 0 22 22" style="right:3px;bottom:1px"><path d="M3 19.500L5 14L16.500 3L20 6.500L8.500 17.500Z" fill="#fff" stroke="#444" stroke-width="1"/><path d="M5 14L8.500 17.500" stroke="#444" stroke-width="0.800"/><path d="M3 19.500L4.300 16L7 18.300Z" fill="#111"/><path d="M7 15.500L18 5" stroke="#ccc" stroke-width="1"/></svg></div>
<div class="cell" style="left:301.5px;top:300.5px"><span>Ластик</span><svg width="23" height="23" viewBox="0 0 22 22" style="right:2px;bottom:1px"><path d="M2 13L12 3L20.500 9L10.500 20Z" fill="#f4f4f4" stroke="#aaa" stroke-width="0.800"/><path d="M7 8L12 3L20.500 9L15.500 14.500Z" fill="#777" stroke="#555" stroke-width="0.600"/></svg></div>
<div class="cell" style="left:364px;top:300.5px"><span>В.Руч.</span><svg width="24" height="24" viewBox="0 0 24 24" style="right:3px;bottom:0"><rect x="2.500" y="3.500" width="17" height="17" rx="4" fill="#fff" stroke="#222" stroke-width="1.200" stroke-dasharray="2.600 2"/><text x="4.500" y="11.500" font-family="Liberation Sans,sans-serif" font-size="8" font-weight="bold" fill="#222">S</text><path d="M7 21L9 16L19 6L22 9L12 19Z" fill="#fff" stroke="#222" stroke-width="1"/><path d="M7 21L8 18.300L10 20Z" fill="#111"/></svg></div>
<div class="cell" style="left:426.5px;top:300.5px"><span>q</span><svg width="24" height="24" viewBox="0 0 24 24" style="right:3px;bottom:0"><rect x="2.500" y="3.500" width="17" height="17" rx="4" fill="#fff" stroke="#222" stroke-width="1.200" stroke-dasharray="2.600 2"/><text x="4.500" y="11.500" font-family="Liberation Sans,sans-serif" font-size="8" font-weight="bold" fill="#222">S</text><path d="M8 17L15 9L22.500 13.500L15 22Z" fill="#f0f0f0" stroke="#444" stroke-width="0.800"/><path d="M11.500 13L15 9L22.500 13.500L19 17.500Z" fill="#666"/></svg></div>
<div class="cell" style="left:239px;top:343px"><span>Заливка</span><svg width="24" height="22" viewBox="0 0 24 22"><path d="M6 12L15 3L22 8.500L20 18L13 20.500Z" fill="#ddd" stroke="#444" stroke-width="1"/><path d="M6 12L15 3L22 8.500L13 14Z" fill="#f4f4f4" stroke="#444" stroke-width="0.800"/><path d="M16 4C18 1 21 3 20 6" fill="none" stroke="#555"/><path d="M2 20.500C2 16 4 13.500 7 13L12 16.500C9 17 8 19 8 20.500Z" fill="#555"/><rect x="1" y="19.500" width="9" height="1.800" fill="#444"/></svg></div>
<div class="cell" style="left:301.5px;top:343px"><span>Двоичн...</span><svg width="25" height="23" viewBox="0 0 24 22" style="right:2px;bottom:2px"><path d="M2 19L4 14L15 3L18 6L7 17Z" fill="#fff" stroke="#444" stroke-width="1"/><path d="M2 19L3 16.300L5 18Z" fill="#111"/><path d="M5.500 15.500L16.500 4.500" stroke="#ccc"/><rect x="13.500" y="15.500" width="4" height="5" fill="#fff" stroke="#888" stroke-width="0.600"/><rect x="17.500" y="15.500" width="4" height="5" fill="#222"/></svg></div>
<div class="cell" style="left:364px;top:343px"><span>Градиент</span><svg width="24" height="18" viewBox="0 0 24 18" style="right:2.500px;bottom:4px"><defs><linearGradient id="gg" x1="0" y1="0" x2="1" y2="0"><stop offset="0" stop-color="#000"/><stop offset="1" stop-color="#e8e8e8"/></linearGradient></defs><rect x="1.500" y="3.500" width="21" height="12" fill="url(#gg)" stroke="#888"/></svg></div>
<div class="cell" style="left:426.5px;top:343px"><span>Двоичн...</span><svg width="25" height="23" viewBox="0 0 24 22" style="right:2px;bottom:2px"><path d="M2 19L4 14L15 3L18 6L7 17Z" fill="#fff" stroke="#444" stroke-width="1"/><path d="M2 19L3 16.300L5 18Z" fill="#111"/><path d="M5.500 15.500L16.500 4.500" stroke="#ccc"/><rect x="13.500" y="15.500" width="4" height="5" fill="#fff" stroke="#888" stroke-width="0.600"/><rect x="17.500" y="15.500" width="4" height="5" fill="#222"/></svg></div>
<div class="cell" style="left:239px;top:385.5px"><span>Кисть</span><svg width="24" height="24" viewBox="0 0 22 22" style="right:3px;bottom:1px"><path d="M8.500 12.500L17 3C19 1.200 21.600 3.800 20 5.800L11.500 15.500Z" fill="#111"/><path d="M5 16L9 12.500L11.500 15L8 19Z" fill="#999" stroke="#444" stroke-width="0.700"/><path d="M2.500 20.500C3 18 4 16.500 5.500 16L8 18.500C7 20 5 20.500 2.500 20.500Z" fill="#222"/></svg></div>
<div class="ecell" style="left:301.5px;top:385.5px;height:40px"></div>
<div class="ecell" style="left:364px;top:385.5px;height:40px"></div>
<div class="ecell" style="left:426.5px;top:385.5px;height:40px"></div>
<div class="ecell" style="left:239px;top:428px;height:21px"></div>
<div class="ecell" style="left:301.5px;top:428px;height:21px"></div>
<div class="ecell" style="left:364px;top:428px;height:21px"></div>
<div class="ecell" style="left:426.5px;top:428px;height:21px"></div>
<div class="a" style="left:490px;top:256px;width:20px;height:193px;background:#ececec"></div>
<div class="sbd" style="left:491px;top:257px;width:18px;height:18px"><div class="tri tu"></div></div>
<div class="sbd" style="left:491px;top:277px;width:18px;height:85px"></div>
<div class="sbd" style="left:491px;top:431px;width:18px;height:18px"><div class="tri td"></div></div>
<!-- options -->
<div class="hl" style="left:235px;top:455.500px;width:277px"></div>
<div class="a" style="left:363px;top:453.700px;width:20px;height:4px;background:#a0a0a0;border-radius:2px"></div>
<div class="cb" style="left:239px;top:461px"></div>
<div class="t" style="left:261px;top:461px;letter-spacing:-0.25px">Выбрать и двигать</div>
<div class="cb" style="left:239px;top:483px"><svg width="16" height="16" viewBox="0 0 16 16"><path d="M3 8.500L6.500 12.500L13.500 3" fill="none" stroke="#111" stroke-width="2"/></svg></div>
<div class="t" style="left:261px;top:483px;letter-spacing:-0.25px">Вырезать и двигать</div>
<div class="hl" style="left:235px;top:506px;width:277px"></div>
<div class="t" style="left:239px;top:511px">Чуствительность:</div>
<div class="t r" style="left:300px;width:72px;top:535px">Движ.</div>
<div class="sl" style="left:377px;top:532px;width:131px;height:21px"></div><div class="fill" style="left:379px;top:534px;width:127px;height:17px"></div>
<div class="t r" style="left:420px;width:83px;top:534px">±50 px</div>
<div class="t r" style="left:280px;width:92px;top:560px">Выб. и дв.</div>
<div class="sl" style="left:377px;top:557px;width:131px;height:21px"></div><div class="fill" style="left:379px;top:559px;width:127px;height:17px"></div>
<div class="t r" style="left:420px;width:83px;top:559px">±50 px</div>
<div class="hl" style="left:235px;top:589px;width:277px"></div>
<div class="rb" style="left:238.700px;top:594px"></div><div class="t" style="left:261px;top:595px">Свободно</div>
<div class="rb" style="left:238.700px;top:616px"></div><div class="t" style="left:261px;top:617px">Размер</div>
<div class="rb" style="left:238.700px;top:639px"></div><div class="t" style="left:261px;top:640px">Деформ.</div>
<div class="rb" style="left:238.700px;top:661px"></div><div class="t" style="left:261px;top:662px">Поворот</div>
<div class="btn" style="left:239px;top:684px;width:132px;height:24px;background:#d6d6d6;border-color:#cccccc;text-shadow:none">OK</div>
<div class="btn" style="left:376px;top:684px;width:132px;height:24px;background:#d6d6d6;border-color:#cccccc;text-shadow:none">Отмена</div>
<div class="hl" style="left:235px;top:719px;width:277px"></div>
<div class="t" style="left:239px;top:727px;letter-spacing:-0.15px">Перспектива</div>
<div class="sl" style="left:335px;top:724px;width:173px;height:21px"></div><div class="fill" style="left:337px;top:726px;width:82px;height:17px"></div>
<div class="t r" style="left:440px;width:62px;top:726px">49</div>
<div class="hl" style="left:235px;top:750px;width:277px"></div>
<div class="btn" style="left:239px;top:754px;width:269px;height:24px">Отразить горизонт.</div>
<div class="btn" style="left:239px;top:781px;width:269px;height:24px">Отразить верт.</div>
<div class="btn" style="left:239px;top:809px;width:269px;height:24px">На 90 гр. влево</div>
<div class="btn" style="left:239px;top:836px;width:269px;height:24px">На 90 гр. вправо</div>
<div class="hl" style="left:235px;top:871px;width:277px"></div>
<div class="t" style="left:239px;top:877px">Настройки пересчёта</div>
<div class="t r" style="left:260px;width:75px;top:902px">Тащить</div>
<div class="dd" style="left:340px;top:898px;width:168px;height:23px"></div><div class="ddb" style="left:486px;top:900px;width:20px;height:19px"></div>
<div class="t" style="left:346px;top:901px;letter-spacing:-0.55px">Bilinear</div>
<div class="t r" style="left:260px;width:75px;top:929px">Просм.</div>
<div class="dd" style="left:340px;top:925px;width:168px;height:24px"></div><div class="ddb" style="left:486px;top:927px;width:20px;height:20px"></div>
<div class="t" style="left:346px;top:928px;letter-spacing:-0.55px">Bilinear</div>
<div class="t r" style="left:260px;width:75px;top:957px">Вывод</div>
<div class="dd" style="left:340px;top:953px;width:168px;height:23px"></div><div class="ddb" style="left:486px;top:955px;width:20px;height:19px"></div>
<div class="t" style="left:346px;top:956px;letter-spacing:-0.55px">Bicubic</div>
<!-- mid panel scrollbar -->
<div class="a" style="left:516px;top:64px;width:17px;height:934px;background:#f0f0f0"></div>
<div class="sbb" style="left:515px;top:64px;width:19px;height:18px"><div class="tri tu"></div></div>
<div class="sbb" style="left:515px;top:979px;width:19px;height:18px"><div class="tri td"></div></div>
<!-- toolbar -->
<div class="db" style="left:538px;top:64px;width:26px;height:24px"><svg width="24" height="22" viewBox="0 0 24 22" fill="none" stroke="#e8e8e8" stroke-width="2"><path d="M8 9A5.500 5.500 0 1 1 8.500 15.500"/><path d="M4 7.500L8 12H4Z" fill="#e8e8e8" stroke-width="1"/><path d="M5 18.500H17" stroke-width="1.200"/></svg></div>
<div class="db" style="left:566px;top:64px;width:26px;height:24px"><svg width="24" height="22" viewBox="0 0 24 22" fill="none" stroke="#e8e8e8" stroke-width="2"><path d="M16 9A5.500 5.500 0 1 0 15.500 15.500"/><path d="M20 7.500L16 12H20Z" fill="#e8e8e8" stroke-width="1"/><path d="M7 18.500H19" stroke-width="1.200"/></svg></div>
<div class="db" style="left:602px;top:64px;width:27px;height:24px"><svg width="25" height="22" viewBox="0 0 25 22" fill="none" stroke="#e4e4e4" stroke-width="1.200"><rect x="4" y="4" width="16" height="14" stroke-dasharray="2 1.500"/><path d="M9 14L14 8L19 12L14 18Z" fill="#dedede"/></svg></div>
<div class="db" style="left:631px;top:64px;width:26px;height:24px"><svg width="24" height="22" viewBox="0 0 24 22" fill="none" stroke="#e4e4e4" stroke-width="1.200"><rect x="4" y="8" width="16" height="10" stroke-dasharray="2 1.500"/><path d="M5 10C7 3 17 3 19 10"/><path d="M4 12H20"/></svg></div>
<div class="a" style="left:663px;top:65px;width:23px;height:21px;background:#fff;border:1px solid #b8b8b8;border-radius:2px"><svg width="21" height="19" viewBox="0 0 21 19"><path d="M1.500 10.500C5 15.500 14 16 19 9.500C14 5 5 5.500 1.500 10.500Z" fill="#fff" stroke="#666" stroke-width="0.500"/><circle cx="10.800" cy="10.700" r="3.400" fill="#0c0c0c"/><circle cx="9.500" cy="9.500" r="0.900" fill="#fff"/><path d="M1.500 10.500C5 5.500 14 4.500 19.300 9.500" stroke="#111" stroke-width="1.700" fill="none"/><path d="M2 7C6 3.200 14 2.200 19.500 5.200" stroke="#8a8a8a" stroke-width="1" fill="none"/><path d="M5 14.500L4.300 15.800M8 15.500L7.700 16.800M11.500 15.800V17M15 15L15.600 16.200" stroke="#555" stroke-width="0.600"/></svg></div>
<div class="t" style="left:690px;top:67.500px">Выделение</div>
<div class="dd" style="left:780px;top:64px;width:82px;height:24px"></div><div class="ddb" style="left:841px;top:66px;width:19px;height:20px"></div>
<div class="t" style="left:787px;top:67.500px">672%</div>
<div class="gb" style="left:865px;top:64px;width:23px;height:24px"><div class="a" style="left:5px;top:9px;width:12px;height:3px;background:#fff"></div></div>
<div class="gb" style="left:891px;top:64px;width:24px;height:24px"><div class="a" style="left:5px;top:9px;width:12px;height:3px;background:#fff"></div><div class="a" style="left:9.500px;top:4.500px;width:3px;height:12px;background:#fff"></div></div>
<div class="gb" style="left:918px;top:64px;width:23px;height:24px"><div class="a" style="left:6px;top:6px;width:9px;height:9px;background:#fff"></div></div>
<div class="dd" style="left:951px;top:64px;width:85px;height:24px"></div><div class="ddb" style="left:1015px;top:66px;width:19px;height:20px"></div>
<div class="t" style="left:958px;top:67.500px">0.0°</div>
<div class="gb" style="left:1039px;top:64px;width:24px;height:24px"><svg width="22" height="22" viewBox="0 0 22 22"><path d="M9.35 16.29A5.3 5.3 0 1 0 6.78 10.780" fill="none" stroke="#fff" stroke-width="2.800"/><path d="M2.300 10.300H11L6.500 16Z" fill="#fff"/></svg></div>
<div class="gb" style="left:1065px;top:64px;width:24px;height:24px"><svg width="22" height="22" viewBox="0 0 22 22"><path d="M12.65 16.29A5.3 5.3 0 1 1 15.22 10.780" fill="none" stroke="#fff" stroke-width="2.800"/><path d="M19.700 10.300H11L15.500 16Z" fill="#fff"/></svg></div>
<div class="gb" style="left:1091px;top:64px;width:24px;height:24px"><div class="a" style="left:6.500px;top:6px;width:9px;height:9px;background:#fff"></div></div>
<div class="lb" style="left:1125px;top:64px;width:29px;height:24px"><svg width="27" height="22" viewBox="0 0 27 22" fill="#0a0a0a"><path d="M3.900 7.200L9.300 2.600V5.700H21.500V8.700H9.300V11.800Z"/><path d="M22.900 14.600L17.500 10V13.100H5V16.100H17.500V19.200Z"/></svg></div>
<div class="t" style="left:1164px;top:67.500px">Плавность</div>
<div class="dd" style="left:1242px;top:64px;width:55px;height:24px"></div><div class="ddb" style="left:1276px;top:66px;width:19px;height:20px"></div>
<div class="t" style="left:1247px;top:67.500px">3</div>
<div class="lb" style="left:1308px;top:64px;width:26px;height:24px"><svg width="24" height="22" viewBox="0 0 24 22"><path d="M5 3L21 19" stroke="#222" stroke-width="1.300"/></svg></div>
<!-- canvas -->
<div class="a" style="left:537.300px;top:91.300px;width:1379px;height:874px;border:2px solid #e9a57e;border-radius:4px;background:#b0b0b0;box-shadow:inset 0 0 0 1px #f3d9ca"></div>
<svg class="a" style="left:1019px;top:94px" width="808" height="500" viewBox="0 0 808 500" shape-rendering="crispEdges"><rect x="0.2" y="0" width="806.4" height="499.8" fill="#808080"/><rect x="0.2" y="365.4" width="134.4" height="134.4" fill="#606060"/><rect x="269.0" y="365.4" width="134.4" height="134.4" fill="#606060"/><rect x="537.8" y="365.4" width="134.4" height="134.4" fill="#606060"/><rect x="134.6" y="231.0" width="134.4" height="134.4" fill="#606060"/><rect x="403.4" y="231.0" width="134.4" height="134.4" fill="#606060"/><rect x="672.2" y="231.0" width="134.4" height="134.4" fill="#606060"/><rect x="0.2" y="96.6" width="134.4" height="134.4" fill="#606060"/><rect x="269.0" y="96.6" width="134.4" height="134.4" fill="#606060"/><rect x="537.8" y="96.6" width="134.4" height="134.4" fill="#606060"/><rect x="134.6" y="0.0" width="134.4" height="96.6" fill="#606060"/><rect x="403.4" y="0.0" width="134.4" height="96.6" fill="#606060"/><rect x="672.2" y="0.0" width="134.4" height="96.6" fill="#606060"/><rect x="50.6" y="180.6" width="100.8" height="8.4" fill="#1c0e02"/><rect x="42.2" y="189.0" width="8.4" height="8.4" fill="#1c0e02"/><rect x="50.6" y="189.0" width="16.8" height="8.4" fill="#9c968c"/><rect x="67.4" y="189.0" width="8.4" height="8.4" fill="#1c0e02"/><rect x="75.8" y="189.0" width="16.8" height="8.4" fill="#9b9786"/><rect x="92.6" y="189.0" width="33.6" height="8.4" fill="#cfc2a5"/><rect x="126.2" y="189.0" width="8.4" height="8.4" fill="#1c0e02"/><rect x="134.6" y="189.0" width="16.8" height="8.4" fill="#9c968c"/><rect x="151.4" y="189.0" width="8.4" height="8.4" fill="#1c0e02"/><rect x="42.2" y="197.4" width="8.4" height="8.4" fill="#1c0e02"/><rect x="50.6" y="197.4" width="8.4" height="8.4" fill="#9c968c"/><rect x="59.0" y="197.4" width="8.4" height="8.4" fill="#1c0e02"/><rect x="67.4" y="197.4" width="16.8" height="8.4" fill="#9b9786"/><rect x="84.2" y="197.4" width="50.4" height="8.4" fill="#cfc2a5"/><rect x="134.6" y="197.4" width="8.4" height="8.4" fill="#1c0e02"/><rect x="143.0" y="197.4" width="8.4" height="8.4" fill="#9c968c"/><rect x="151.4" y="197.4" width="8.4" height="8.4" fill="#1c0e02"/><rect x="33.8" y="205.8" width="8.4" height="8.4" fill="#1c0e02"/><rect x="42.2" y="205.8" width="16.8" height="8.4" fill="#767676"/><rect x="59.0" y="205.8" width="16.8" height="8.4" fill="#9b9786"/><rect x="75.8" y="205.8" width="16.8" height="8.4" fill="#67635a"/><rect x="92.6" y="205.8" width="16.8" height="8.4" fill="#cfc2a5"/><rect x="109.4" y="205.8" width="8.4" height="8.4" fill="#433f37"/><rect x="117.8" y="205.8" width="8.4" height="8.4" fill="#67635a"/><rect x="126.2" y="205.8" width="16.8" height="8.4" fill="#cfc2a5"/><rect x="143.0" y="205.8" width="8.4" height="8.4" fill="#1c0e02"/><rect x="151.4" y="205.8" width="8.4" height="8.4" fill="#767676"/><rect x="159.8" y="205.8" width="8.4" height="8.4" fill="#1c0e02"/><rect x="33.8" y="214.2" width="8.4" height="8.4" fill="#1c0e02"/><rect x="42.2" y="214.2" width="16.8" height="8.4" fill="#767676"/><rect x="59.0" y="214.2" width="8.4" height="8.4" fill="#433f37"/><rect x="67.4" y="214.2" width="8.4" height="8.4" fill="#67635a"/><rect x="75.8" y="214.2" width="16.8" height="8.4" fill="#9b9786"/><rect x="92.6" y="214.2" width="16.8" height="8.4" fill="#cfc2a5"/><rect x="109.4" y="214.2" width="16.8" height="8.4" fill="#9b9786"/><rect x="126.2" y="214.2" width="16.8" height="8.4" fill="#67635a"/><rect x="143.0" y="214.2" width="8.4" height="8.4" fill="#1c0e02"/><rect x="151.4" y="214.2" width="8.4" height="8.4" fill="#767676"/><rect x="159.8" y="214.2" width="8.4" height="8.4" fill="#1c0e02"/><rect x="33.8" y="222.6" width="25.2" height="8.4" fill="#1c0e02"/><rect x="59.0" y="222.6" width="33.6" height="8.4" fill="#9b9786"/><rect x="92.6" y="222.6" width="16.8" height="8.4" fill="#cfc2a5"/><rect x="109.4" y="222.6" width="25.2" height="8.4" fill="#9b9786"/><rect x="134.6" y="222.6" width="33.6" height="8.4" fill="#1c0e02"/><rect x="33.8" y="231.0" width="8.4" height="8.4" fill="#1c0e02"/><rect x="42.2" y="231.0" width="8.4" height="8.4" fill="#9b9786"/><rect x="50.6" y="231.0" width="8.4" height="8.4" fill="#cfc2a5"/><rect x="59.0" y="231.0" width="33.6" height="8.4" fill="#9b9786"/><rect x="92.6" y="231.0" width="16.8" height="8.4" fill="#cfc2a5"/><rect x="109.4" y="231.0" width="8.4" height="8.4" fill="#1c0e02"/><rect x="117.8" y="231.0" width="16.8" height="8.4" fill="#9b9786"/><rect x="134.6" y="231.0" width="8.4" height="8.4" fill="#1c0e02"/><rect x="143.0" y="231.0" width="8.4" height="8.4" fill="#9b9786"/><rect x="151.4" y="231.0" width="8.4" height="8.4" fill="#cfc2a5"/><rect x="159.8" y="231.0" width="8.4" height="8.4" fill="#1c0e02"/><rect x="33.8" y="239.4" width="8.4" height="8.4" fill="#1c0e02"/><rect x="42.2" y="239.4" width="25.2" height="8.4" fill="#9b9786"/><rect x="67.4" y="239.4" width="50.4" height="8.4" fill="#cfc2a5"/><rect x="117.8" y="239.4" width="8.4" height="8.4" fill="#1c0e02"/><rect x="126.2" y="239.4" width="16.8" height="8.4" fill="#cfc2a5"/><rect x="143.0" y="239.4" width="8.4" height="8.4" fill="#1c0e02"/><rect x="151.4" y="239.4" width="8.4" height="8.4" fill="#cfc2a5"/><rect x="159.8" y="239.4" width="8.4" height="8.4" fill="#1c0e02"/><rect x="33.8" y="247.8" width="8.4" height="8.4" fill="#1c0e02"/><rect x="42.2" y="247.8" width="8.4" height="8.4" fill="#9b9786"/><rect x="50.6" y="247.8" width="8.4" height="8.4" fill="#cfc2a5"/><rect x="59.0" y="247.8" width="8.4" height="8.4" fill="#9b9786"/><rect x="67.4" y="247.8" width="16.8" height="8.4" fill="#cfc2a5"/><rect x="84.2" y="247.8" width="8.4" height="8.4" fill="#9b9786"/><rect x="92.6" y="247.8" width="25.2" height="8.4" fill="#cfc2a5"/><rect x="117.8" y="247.8" width="8.4" height="8.4" fill="#1c0e02"/><rect x="126.2" y="247.8" width="16.8" height="8.4" fill="#cfc2a5"/><rect x="143.0" y="247.8" width="8.4" height="8.4" fill="#1c0e02"/><rect x="151.4" y="247.8" width="8.4" height="8.4" fill="#9b9786"/><rect x="159.8" y="247.8" width="8.4" height="8.4" fill="#1c0e02"/><rect x="42.2" y="256.2" width="16.8" height="8.4" fill="#1c0e02"/><rect x="59.0" y="256.2" width="8.4" height="8.4" fill="#9b9786"/><rect x="67.4" y="256.2" width="8.4" height="8.4" fill="#cfc2a5"/><rect x="75.8" y="256.2" width="8.4" height="8.4" fill="#9b9786"/><rect x="84.2" y="256.2" width="8.4" height="8.4" fill="#cfc2a5"/><rect x="92.6" y="256.2" width="8.4" height="8.4" fill="#9b9786"/><rect x="101.0" y="256.2" width="16.8" height="8.4" fill="#1c0e02"/><rect x="117.8" y="256.2" width="8.4" height="8.4" fill="#cfc2a5"/><rect x="126.2" y="256.2" width="8.4" height="8.4" fill="#9b9786"/><rect x="134.6" y="256.2" width="8.4" height="8.4" fill="#cfc2a5"/><rect x="143.0" y="256.2" width="16.8" height="8.4" fill="#1c0e02"/><rect x="50.6" y="264.6" width="8.4" height="8.4" fill="#1c0e02"/><rect x="59.0" y="264.6" width="16.8" height="8.4" fill="#9b9786"/><rect x="75.8" y="264.6" width="67.2" height="8.4" fill="#cfc2a5"/><rect x="143.0" y="264.6" width="8.4" height="8.4" fill="#1c0e02"/><rect x="59.0" y="273.0" width="8.4" height="8.4" fill="#1c0e02"/><rect x="67.4" y="273.0" width="8.4" height="8.4" fill="#9b9786"/><rect x="75.8" y="273.0" width="8.4" height="8.4" fill="#cfc2a5"/><rect x="84.2" y="273.0" width="25.2" height="8.4" fill="#3f3a34"/><rect x="109.4" y="273.0" width="16.8" height="8.4" fill="#cfc2a5"/><rect x="126.2" y="273.0" width="8.4" height="8.4" fill="#9b9786"/><rect x="134.6" y="273.0" width="8.4" height="8.4" fill="#1c0e02"/><rect x="67.4" y="281.4" width="8.4" height="8.4" fill="#1c0e02"/><rect x="75.8" y="281.4" width="8.4" height="8.4" fill="#9b9786"/><rect x="84.2" y="281.4" width="33.6" height="8.4" fill="#cfc2a5"/><rect x="117.8" y="281.4" width="8.4" height="8.4" fill="#9b9786"/><rect x="126.2" y="281.4" width="8.4" height="8.4" fill="#1c0e02"/><rect x="67.4" y="289.8" width="16.8" height="8.4" fill="#1c0e02"/><rect x="84.2" y="289.8" width="16.8" height="8.4" fill="#9b9786"/><rect x="101.0" y="289.8" width="25.2" height="8.4" fill="#1c0e02"/><rect x="59.0" y="298.2" width="8.4" height="8.4" fill="#1c0e02"/><rect x="67.4" y="298.2" width="16.8" height="8.4" fill="#a9a8a3"/><rect x="84.2" y="298.2" width="8.4" height="8.4" fill="#1c0e02"/><rect x="92.6" y="298.2" width="16.8" height="8.4" fill="#9b9786"/><rect x="109.4" y="298.2" width="8.4" height="8.4" fill="#cfc2a5"/><rect x="117.8" y="298.2" width="8.4" height="8.4" fill="#1c0e02"/><rect x="50.6" y="306.6" width="8.4" height="8.4" fill="#1c0e02"/><rect x="59.0" y="306.6" width="25.2" height="8.4" fill="#422e23"/><rect x="84.2" y="306.6" width="8.4" height="8.4" fill="#a9a8a3"/><rect x="92.6" y="306.6" width="8.4" height="8.4" fill="#1c0e02"/><rect x="101.0" y="306.6" width="8.4" height="8.4" fill="#cfc2a5"/><rect x="109.4" y="306.6" width="8.4" height="8.4" fill="#1c0e02"/><rect x="117.8" y="306.6" width="8.4" height="8.4" fill="#cecbc3"/><rect x="126.2" y="306.6" width="8.4" height="8.4" fill="#1c0e02"/><rect x="42.2" y="315.0" width="8.4" height="8.4" fill="#1c0e02"/><rect x="50.6" y="315.0" width="16.8" height="8.4" fill="#cecbc3"/><rect x="67.4" y="315.0" width="16.8" height="8.4" fill="#422e23"/><rect x="84.2" y="315.0" width="8.4" height="8.4" fill="#1c0e02"/><rect x="92.6" y="315.0" width="8.4" height="8.4" fill="#cecbc3"/><rect x="101.0" y="315.0" width="8.4" height="8.4" fill="#1c0e02"/><rect x="109.4" y="315.0" width="8.4" height="8.4" fill="#cecbc3"/><rect x="117.8" y="315.0" width="8.4" height="8.4" fill="#1c0e02"/><rect x="126.2" y="315.0" width="8.4" height="8.4" fill="#6a392b"/><rect x="134.6" y="315.0" width="8.4" height="8.4" fill="#1c0e02"/><rect x="201.8" y="315.0" width="8.4" height="8.4" fill="#1c0e02"/><rect x="218.6" y="315.0" width="8.4" height="8.4" fill="#1c0e02"/><rect x="33.8" y="323.4" width="8.4" height="8.4" fill="#1c0e02"/><rect x="42.2" y="323.4" width="8.4" height="8.4" fill="#a9a8a3"/><rect x="50.6" y="323.4" width="16.8" height="8.4" fill="#cecbc3"/><rect x="67.4" y="323.4" width="16.8" height="8.4" fill="#422e23"/><rect x="84.2" y="323.4" width="8.4" height="8.4" fill="#6a392b"/><rect x="92.6" y="323.4" width="8.4" height="8.4" fill="#1c0e02"/><rect x="101.0" y="323.4" width="8.4" height="8.4" fill="#6a392b"/><rect x="109.4" y="323.4" width="8.4" height="8.4" fill="#1c0e02"/><rect x="117.8" y="323.4" width="16.8" height="8.4" fill="#6a392b"/><rect x="134.6" y="323.4" width="16.8" height="8.4" fill="#1c0e02"/><rect x="193.4" y="323.4" width="8.4" height="8.4" fill="#1c0e02"/><rect x="201.8" y="323.4" width="8.4" height="8.4" fill="#cfc2a5"/><rect x="210.2" y="323.4" width="8.4" height="8.4" fill="#1c0e02"/><rect x="218.6" y="323.4" width="8.4" height="8.4" fill="#cfc2a5"/><rect x="227.0" y="323.4" width="8.4" height="8.4" fill="#1c0e02"/><rect x="25.4" y="331.8" width="8.4" height="8.4" fill="#1c0e02"/><rect x="33.8" y="331.8" width="25.2" height="8.4" fill="#a9a8a3"/><rect x="59.0" y="331.8" width="8.4" height="8.4" fill="#1c0e02"/><rect x="67.4" y="331.8" width="25.2" height="8.4" fill="#757168"/><rect x="92.6" y="331.8" width="42.0" height="8.4" fill="#6a392b"/><rect x="134.6" y="331.8" width="8.4" height="8.4" fill="#1c0e02"/><rect x="143.0" y="331.8" width="8.4" height="8.4" fill="#cecbc3"/><rect x="151.4" y="331.8" width="42.0" height="8.4" fill="#1c0e02"/><rect x="193.4" y="331.8" width="16.8" height="8.4" fill="#9b9786"/><rect x="210.2" y="331.8" width="8.4" height="8.4" fill="#cfc2a5"/><rect x="218.6" y="331.8" width="16.8" height="8.4" fill="#1c0e02"/><rect x="17.0" y="340.2" width="8.4" height="8.4" fill="#1c0e02"/><rect x="25.4" y="340.2" width="25.2" height="8.4" fill="#a9a8a3"/><rect x="50.6" y="340.2" width="8.4" height="8.4" fill="#1c0e02"/><rect x="59.0" y="340.2" width="33.6" height="8.4" fill="#757168"/><rect x="92.6" y="340.2" width="42.0" height="8.4" fill="#9a927e"/><rect x="134.6" y="340.2" width="8.4" height="8.4" fill="#1c0e02"/><rect x="143.0" y="340.2" width="8.4" height="8.4" fill="#a9a8a3"/><rect x="151.4" y="340.2" width="16.8" height="8.4" fill="#cecbc3"/><rect x="168.2" y="340.2" width="8.4" height="8.4" fill="#a9a8a3"/><rect x="176.6" y="340.2" width="8.4" height="8.4" fill="#cecbc3"/><rect x="185.0" y="340.2" width="8.4" height="8.4" fill="#1c0e02"/><rect x="193.4" y="340.2" width="8.4" height="8.4" fill="#cfc2a5"/><rect x="201.8" y="340.2" width="16.8" height="8.4" fill="#9b9786"/><rect x="218.6" y="340.2" width="16.8" height="8.4" fill="#cfc2a5"/><rect x="235.4" y="340.2" width="8.4" height="8.4" fill="#1c0e02"/><rect x="17.0" y="348.6" width="8.4" height="8.4" fill="#1c0e02"/><rect x="25.4" y="348.6" width="16.8" height="8.4" fill="#a9a8a3"/><rect x="42.2" y="348.6" width="8.4" height="8.4" fill="#1c0e02"/><rect x="50.6" y="348.6" width="33.6" height="8.4" fill="#422e23"/><rect x="84.2" y="348.6" width="16.8" height="8.4" fill="#757168"/><rect x="101.0" y="348.6" width="25.2" height="8.4" fill="#9a927e"/><rect x="126.2" y="348.6" width="8.4" height="8.4" fill="#757168"/><rect x="134.6" y="348.6" width="16.8" height="8.4" fill="#1c0e02"/><rect x="151.4" y="348.6" width="25.2" height="8.4" fill="#a9a8a3"/><rect x="176.6" y="348.6" width="8.4" height="8.4" fill="#cecbc3"/><rect x="185.0" y="348.6" width="8.4" height="8.4" fill="#1c0e02"/><rect x="193.4" y="348.6" width="8.4" height="8.4" fill="#cfc2a5"/><rect x="201.8" y="348.6" width="16.8" height="8.4" fill="#9b9786"/><rect x="218.6" y="348.6" width="16.8" height="8.4" fill="#1c0e02"/><rect x="17.0" y="357.0" width="8.4" height="8.4" fill="#1c0e02"/><rect x="25.4" y="357.0" width="16.8" height="8.4" fill="#a9a8a3"/><rect x="42.2" y="357.0" width="33.6" height="8.4" fill="#422e23"/><rect x="75.8" y="357.0" width="50.4" height="8.4" fill="#6a392b"/><rect x="126.2" y="357.0" width="8.4" height="8.4" fill="#1c0e02"/><rect x="151.4" y="357.0" width="25.2" height="8.4" fill="#1c0e02"/><rect x="176.6" y="357.0" width="8.4" height="8.4" fill="#a9a8a3"/><rect x="185.0" y="357.0" width="8.4" height="8.4" fill="#9b9786"/><rect x="193.4" y="357.0" width="8.4" height="8.4" fill="#cfc2a5"/><rect x="201.8" y="357.0" width="8.4" height="8.4" fill="#9b9786"/><rect x="210.2" y="357.0" width="16.8" height="8.4" fill="#cfc2a5"/><rect x="227.0" y="357.0" width="8.4" height="8.4" fill="#1c0e02"/><rect x="25.4" y="365.4" width="16.8" height="8.4" fill="#1c0e02"/><rect x="42.2" y="365.4" width="42.0" height="8.4" fill="#422e23"/><rect x="84.2" y="365.4" width="33.6" height="8.4" fill="#6a392b"/><rect x="117.8" y="365.4" width="8.4" height="8.4" fill="#422e23"/><rect x="126.2" y="365.4" width="8.4" height="8.4" fill="#1c0e02"/><rect x="176.6" y="365.4" width="50.4" height="8.4" fill="#1c0e02"/><rect x="33.8" y="373.8" width="8.4" height="8.4" fill="#1c0e02"/><rect x="42.2" y="373.8" width="25.2" height="8.4" fill="#422e23"/><rect x="67.4" y="373.8" width="58.8" height="8.4" fill="#6a392b"/><rect x="126.2" y="373.8" width="8.4" height="8.4" fill="#1c0e02"/><rect x="33.8" y="382.2" width="16.8" height="8.4" fill="#1c0e02"/><rect x="50.6" y="382.2" width="33.6" height="8.4" fill="#422e23"/><rect x="84.2" y="382.2" width="33.6" height="8.4" fill="#6a392b"/><rect x="117.8" y="382.2" width="8.4" height="8.4" fill="#422e23"/><rect x="126.2" y="382.2" width="8.4" height="8.4" fill="#1c0e02"/><rect x="33.8" y="390.6" width="8.4" height="8.4" fill="#1c0e02"/><rect x="42.2" y="390.6" width="8.4" height="8.4" fill="#28261a"/><rect x="50.6" y="390.6" width="16.8" height="8.4" fill="#1c0e02"/><rect x="67.4" y="390.6" width="50.4" height="8.4" fill="#422e23"/><rect x="117.8" y="390.6" width="8.4" height="8.4" fill="#1c0e02"/><rect x="33.8" y="399.0" width="8.4" height="8.4" fill="#1c0e02"/><rect x="42.2" y="399.0" width="8.4" height="8.4" fill="#28261a"/><rect x="50.6" y="399.0" width="25.2" height="8.4" fill="#4f4229"/><rect x="75.8" y="399.0" width="8.4" height="8.4" fill="#1c0e02"/><rect x="84.2" y="399.0" width="25.2" height="8.4" fill="#28261a"/><rect x="109.4" y="399.0" width="16.8" height="8.4" fill="#1c0e02"/><rect x="33.8" y="407.4" width="8.4" height="8.4" fill="#1c0e02"/><rect x="42.2" y="407.4" width="8.4" height="8.4" fill="#28261a"/><rect x="50.6" y="407.4" width="67.2" height="8.4" fill="#4f4229"/><rect x="117.8" y="407.4" width="8.4" height="8.4" fill="#1c0e02"/><rect x="33.8" y="415.8" width="8.4" height="8.4" fill="#1c0e02"/><rect x="42.2" y="415.8" width="16.8" height="8.4" fill="#28261a"/><rect x="59.0" y="415.8" width="33.6" height="8.4" fill="#4f4229"/><rect x="92.6" y="415.8" width="8.4" height="8.4" fill="#1c0e02"/><rect x="101.0" y="415.8" width="16.8" height="8.4" fill="#4f4229"/><rect x="117.8" y="415.8" width="8.4" height="8.4" fill="#1c0e02"/><rect x="33.8" y="424.2" width="8.4" height="8.4" fill="#1c0e02"/><rect x="42.2" y="424.2" width="16.8" height="8.4" fill="#28261a"/><rect x="59.0" y="424.2" width="33.6" height="8.4" fill="#4f4229"/><rect x="92.6" y="424.2" width="8.4" height="8.4" fill="#1c0e02"/><rect x="101.0" y="424.2" width="16.8" height="8.4" fill="#4f4229"/><rect x="117.8" y="424.2" width="8.4" height="8.4" fill="#1c0e02"/><rect x="42.2" y="432.6" width="8.4" height="8.4" fill="#1c0e02"/><rect x="50.6" y="432.6" width="8.4" height="8.4" fill="#28261a"/><rect x="59.0" y="432.6" width="25.2" height="8.4" fill="#4f4229"/><rect x="84.2" y="432.6" width="8.4" height="8.4" fill="#1c0e02"/><rect x="92.6" y="432.6" width="8.4" height="8.4" fill="#28261a"/><rect x="101.0" y="432.6" width="8.4" height="8.4" fill="#4f4229"/><rect x="109.4" y="432.6" width="8.4" height="8.4" fill="#1c0e02"/><rect x="42.2" y="441.0" width="8.4" height="8.4" fill="#1c0e02"/><rect x="50.6" y="441.0" width="16.8" height="8.4" fill="#28261a"/><rect x="67.4" y="441.0" width="16.8" height="8.4" fill="#4f4229"/><rect x="84.2" y="441.0" width="8.4" height="8.4" fill="#1c0e02"/><rect x="92.6" y="441.0" width="8.4" height="8.4" fill="#28261a"/><rect x="101.0" y="441.0" width="8.4" height="8.4" fill="#4f4229"/><rect x="109.4" y="441.0" width="8.4" height="8.4" fill="#1c0e02"/><rect x="42.2" y="449.4" width="8.4" height="8.4" fill="#1c0e02"/><rect x="50.6" y="449.4" width="33.6" height="8.4" fill="#28261a"/><rect x="84.2" y="449.4" width="8.4" height="8.4" fill="#1c0e02"/><rect x="92.6" y="449.4" width="16.8" height="8.4" fill="#28261a"/><rect x="109.4" y="449.4" width="8.4" height="8.4" fill="#1c0e02"/><rect x="42.2" y="457.8" width="8.4" height="8.4" fill="#1c0e02"/><rect x="50.6" y="457.8" width="25.2" height="8.4" fill="#28261a"/><rect x="75.8" y="457.8" width="8.4" height="8.4" fill="#1c0e02"/><rect x="84.2" y="457.8" width="16.8" height="8.4" fill="#28261a"/><rect x="101.0" y="457.8" width="8.4" height="8.4" fill="#1c0e02"/><rect x="42.2" y="466.2" width="8.4" height="8.4" fill="#1c0e02"/><rect x="50.6" y="466.2" width="25.2" height="8.4" fill="#28261a"/><rect x="75.8" y="466.2" width="8.4" height="8.4" fill="#1c0e02"/><rect x="84.2" y="466.2" width="16.8" height="8.4" fill="#28261a"/><rect x="101.0" y="466.2" width="8.4" height="8.4" fill="#1c0e02"/><rect x="42.2" y="474.6" width="8.4" height="8.4" fill="#1c0e02"/><rect x="50.6" y="474.6" width="8.4" height="8.4" fill="#28261a"/><rect x="59.0" y="474.6" width="16.8" height="8.4" fill="#4f4229"/><rect x="75.8" y="474.6" width="8.4" height="8.4" fill="#1c0e02"/><rect x="84.2" y="474.6" width="8.4" height="8.4" fill="#28261a"/><rect x="92.6" y="474.6" width="8.4" height="8.4" fill="#4f4229"/><rect x="101.0" y="474.6" width="8.4" height="8.4" fill="#1c0e02"/><rect x="50.6" y="483.0" width="16.8" height="8.4" fill="#1c0e02"/><rect x="67.4" y="483.0" width="16.8" height="8.4" fill="#423f33"/><rect x="84.2" y="483.0" width="8.4" height="8.4" fill="#1c0e02"/><rect x="92.6" y="483.0" width="16.8" height="8.4" fill="#423f33"/><rect x="109.4" y="483.0" width="8.4" height="8.4" fill="#1c0e02"/><rect x="50.6" y="491.4" width="8.4" height="8.4" fill="#1c0e02"/><rect x="59.0" y="491.4" width="16.8" height="8.4" fill="#423f33"/><rect x="75.8" y="491.4" width="16.8" height="8.4" fill="#6a624e"/><rect x="92.6" y="491.4" width="8.4" height="8.4" fill="#1c0e02"/><rect x="101.0" y="491.4" width="16.8" height="8.4" fill="#6a624e"/><rect x="117.8" y="491.4" width="8.4" height="8.4" fill="#1c0e02"/></svg>
<!-- canvas scrollbars -->
<div class="a" style="left:1893.500px;top:93px;width:21px;height:870.500px;background:#f8f8f8"></div>
<div class="a" style="left:1895.300px;top:94px;width:17.500px;height:848.500px;background:#e8e8e8"></div>
<div class="a" style="left:539px;top:942.500px;width:1375.500px;height:21px;background:#f8f8f8"></div>
<div class="a" style="left:541px;top:944.500px;width:1353px;height:17.500px;background:#e8e8e8"></div>
<div class="sbd" style="left:1895px;top:94px;width:19px;height:18px"><div class="tri tu"></div></div>
<div class="sbd" style="left:1895px;top:672px;width:19px;height:229px"></div>
<div class="sbd" style="left:1895px;top:924px;width:19px;height:18px"><div class="tri td"></div></div>
<div class="sbd" style="left:541px;top:944px;width:18px;height:18px"><div class="tri tl"></div></div>
<div class="sbd" style="left:681px;top:944px;width:822px;height:18px"></div>
<div class="sbd" style="left:1875px;top:944px;width:19px;height:18px"><div class="tri tr"></div></div>
<!-- tabs -->
<div class="tab" style="left:538px"><svg width="17.200" height="20" viewBox="0 0 18 21"><use href="#tic"/></svg><div class="n">Institute_hall.png</div><div class="p">168%</div></div>
<div class="tab" style="left:765px"><svg width="17.200" height="20" viewBox="0 0 18 21"><use href="#tic"/></svg><div class="n">Beast contract.sai2</div><div class="p">35%</div></div>
<div class="tab" style="left:993px"><svg width="17.200" height="20" viewBox="0 0 18 21"><use href="#tic"/></svg><div class="n">$party_boy.png</div><div class="p">400%</div></div>
<div class="tab" style="left:1220px;background:#d4d4ff;border-color:#8484ff"><svg width="17.200" height="20" viewBox="0 0 18 21"><use href="#tic"/></svg><div class="n">$prof.png</div><div class="p">672%</div></div>
<svg width="0" height="0" style="position:absolute"><defs><radialGradient id="tg" cx="0.5" cy="0.45" r="0.6"><stop offset="0" stop-color="#f6fcc0"/><stop offset="0.45" stop-color="#98ec68"/><stop offset="0.8" stop-color="#34ac3c"/><stop offset="1" stop-color="#14682c"/></radialGradient><linearGradient id="tb" x1="0" y1="0" x2="0.6" y2="1"><stop offset="0" stop-color="#3a84e8"/><stop offset="0.45" stop-color="#3a84e8" stop-opacity="0"/></linearGradient><g id="tic"><path d="M0.5 0.5H13L17.5 5V20.5H0.5Z" fill="#0c3030" stroke="#082424" stroke-width="1"/><path d="M1.5 1.5H12.5L16.500 5.5V19.500H1.5Z" fill="url(#tg)"/><path d="M1.5 1.5H12.5L16.500 5.5V19.500H1.5Z" fill="url(#tb)"/><path d="M13 9.500L16.500 8V14Z" fill="#f0a038" opacity="0.700"/><path d="M1.500 12.500L11 17.500" stroke="#8a5a20" stroke-width="2"/><path d="M1.500 16V19.500H12L2 15Z" fill="#0c4a1c"/><path d="M13 0.5V5H17.5Z" fill="#f4f4f4"/></g></defs></svg>
<div class="sbb" style="left:1898px;top:968px;width:18px;height:13px"><div class="tri tu"></div></div>
<div class="sbb" style="left:1898px;top:984px;width:18px;height:13px"><div class="tri td"></div></div>
<!-- status -->
<div class="t" style="left:1470px;top:1005.700px">Память:</div>
<div class="a" style="left:1531px;top:1002px;width:155px;height:23px;background:#f8f8f8;border:1px solid #b0b0b0;border-radius:2px;box-shadow:0 0 0 1px #e8e8e8"></div>
<div class="a" style="left:1534px;top:1004.200px;width:17.300px;height:18.300px;background:#46dca0"></div><div class="a" style="left:1551.300px;top:1004.200px;width:2.400px;height:18.300px;background:#8c90f4"></div>
<div class="t" style="left:1537px;top:1005.700px;letter-spacing:-0.5px">12% (14%)</div>
<div class="t" style="left:1696px;top:1005.700px">Диск:</div>
<div class="a" style="left:1740px;top:1002px;width:155px;height:23px;background:#f8f8f8;border:1px solid #b0b0b0;border-radius:2px;box-shadow:0 0 0 1px #e8e8e8"></div>
<div class="a" style="left:1743px;top:1004.200px;width:147px;height:18.300px;background:#40c0ff"></div>
<div class="t" style="left:1745px;top:1005.700px">99%</div>
<!-- taskbar -->
<div class="a" style="left:0;top:1030px;width:1920px;height:50px;background:#171717"></div>
<div class="a" style="left:186px;top:1030px;width:61px;height:47px;background:#474747"></div>
<div class="a" style="left:186px;top:1077px;width:61px;height:3px;background:#e693ee"></div>
<div class="a" style="left:253px;top:1077px;width:51px;height:3px;background:#e693ee"></div>
<div class="a" style="left:315px;top:1077px;width:51px;height:3px;background:#e693ee"></div>
<div class="a" style="left:501px;top:1077px;width:51px;height:3px;background:#e693ee"></div>
<div class="a" style="left:563px;top:1077px;width:51px;height:3px;background:#e693ee"></div>
<svg class="a" style="left:19px;top:1044px" width="22" height="22" viewBox="0 0 22 22" fill="#fff"><path d="M1 3.800L9.300 2.600V10.300H1ZM10.300 2.450L21 1V10.300H10.300ZM1 11.300H9.300V19L1 17.800ZM10.300 11.300H21V20.600L10.300 19.150Z"/></svg>
<svg class="a" style="left:78px;top:1042px" width="26" height="26" viewBox="0 0 26 26" fill="none" stroke="#fff" stroke-width="1.600"><circle cx="15" cy="10" r="6.600"/><path d="M10.300 14.800L2.500 22.500"/></svg>
<!-- SAI rainbow S -->
<svg class="a" style="left:202px;top:1040px" width="28" height="30" viewBox="0 0 28 30"><defs><linearGradient id="rb" gradientUnits="userSpaceOnUse" x1="2.500" y1="0" x2="26" y2="0"><stop offset="0" stop-color="#d800d0"/><stop offset="0.150" stop-color="#1a10c8"/><stop offset="0.340" stop-color="#00d0ff"/><stop offset="0.540" stop-color="#00dc20"/><stop offset="0.720" stop-color="#f4f000"/><stop offset="0.870" stop-color="#ff8000"/><stop offset="1" stop-color="#ff1000"/></linearGradient></defs><path d="M24.500 7.500C25.500 3.800 20 2.300 15.500 2.800C10.500 3.300 7.500 4.600 7 7" fill="none" stroke="url(#rb)" stroke-width="3.300" stroke-linecap="round"/><path d="M6.600 12C10 12.200 22 15 24.300 19.500C25.800 23.500 20 27.300 13.500 27.200C7.500 27.200 3 25 3.800 21.500C4.300 19.800 6 19 8 18.800" fill="none" stroke="url(#rb)" stroke-width="3.300" stroke-linecap="round"/></svg>
<!-- castle -->
<svg class="a" style="left:262px;top:1040px" width="32" height="30" viewBox="0 0 32 30"><ellipse cx="16" cy="26.500" rx="14" ry="2.500" fill="#b06030"/><rect x="8" y="9" width="16" height="16" fill="#f0f0f0"/><rect x="5" y="13" width="5" height="12" fill="#e0e0e0"/><rect x="22" y="13" width="5" height="12" fill="#e0e0e0"/><path d="M5 13L7.500 6L10 13ZM22 13L24.500 6L27 13ZM10 9L12.500 2L15 9ZM15 9L17.500 1L20 9Z" fill="#d84030"/><path d="M13 25V20A3 3 0 0 1 19 20V25Z" fill="#333"/><circle cx="4.500" cy="23" r="3.500" fill="#30b030"/><circle cx="27.500" cy="23" r="3.500" fill="#30b030"/><rect x="11" y="12" width="2" height="3" fill="#888"/><rect x="19" y="12" width="2" height="3" fill="#888"/></svg>
<!-- snipping -->
<svg class="a" style="left:324px;top:1040px" width="32" height="30" viewBox="0 0 32 30"><ellipse cx="14" cy="17" rx="12" ry="6.500" fill="#a0a0a0" transform="rotate(-22 14 17)"/><ellipse cx="15" cy="13" rx="13" ry="7.500" fill="#f8f8f8" stroke="#d83030" stroke-width="1.400" transform="rotate(-22 15 13)"/><path d="M9 8L20 21M22 7L16 21" stroke="#888" stroke-width="1.400"/><ellipse cx="19" cy="25" rx="2.200" ry="3.500" fill="none" stroke="#2090e0" stroke-width="1.800" transform="rotate(20 19 25)"/><ellipse cx="25.500" cy="21.500" rx="2.200" ry="3.500" fill="none" stroke="#2090e0" stroke-width="1.800" transform="rotate(-60 25.500 21.500)"/></svg>
<!-- FL -->
<svg class="a" style="left:387px;top:1040px" width="30" height="30" viewBox="0 0 30 30"><defs><radialGradient id="flc" cx="0.400" cy="0.350"><stop offset="0" stop-color="#f0f4f8"/><stop offset="0.600" stop-color="#8090a0"/><stop offset="1" stop-color="#303840"/></radialGradient><linearGradient id="flf" x1="0" y1="0" x2="1" y2="0"><stop offset="0" stop-color="#fff060"/><stop offset="0.450" stop-color="#ffa010"/><stop offset="1" stop-color="#e04008"/></linearGradient></defs><circle cx="15" cy="15" r="13.500" fill="url(#flc)"/><circle cx="15" cy="15" r="10" fill="#283038"/><path d="M8 10C13 6 22 8 22 13C22 20 15 26 10 28C7 22 6 15 8 10Z" fill="url(#flf)"/><path d="M11 9C13 4 18 3 19 1C19 5 22 6 24 9C20 11 15 11 11 9Z" fill="#88c838"/></svg>
<!-- folder -->
<svg class="a" style="left:450px;top:1042px" width="28" height="25" viewBox="0 0 28 25"><path d="M1 2.500C1 1.500 1.500 1 2.500 1H10L12.500 3.500H26.500V22H1Z" fill="#f0c850"/><rect x="1" y="5" width="26.500" height="17.500" fill="#ffe08c"/><path d="M6 23V13.500H22V23H18.500V17H9.500V23Z" fill="#38a8e8"/><rect x="3" y="2" width="5" height="1.400" fill="#60b8e8"/></svg>
<!-- chrome -->
<svg class="a" style="left:510px;top:1039px" width="32" height="32" viewBox="-16 -16 32 32"><circle r="15" fill="#fff"/><path d="M0 0L-12.990 -7.500A15 15 0 0 1 12.990 -7.500Z" fill="#e33b2e"/><path d="M0 0L12.990 -7.500A15 15 0 0 1 0 15Z" fill="#fbc116"/><path d="M0 0L0 15A15 15 0 0 1 -12.990 -7.500Z" fill="#2ba24c"/><path d="M0 -7H12.700L6.500 3.500Z" fill="#e33b2e"/><path d="M6.062 3.500L-0.300 14.500L-6.200 3.600Z" fill="#fbc116"/><path d="M-6.062 3.500L-12.600 -7.300L0 -7Z" fill="#2ba24c"/><circle r="7" fill="#fff"/><circle r="5.600" fill="#3b7ded"/></svg>
<!-- tray -->
<svg class="a" style="left:1654px;top:1043px" width="24" height="24" viewBox="0 0 24 24" fill="none" stroke="#fff" stroke-width="1.300"><circle cx="13" cy="5.400" r="2.800"/><path d="M10.300 9.800C12 7.800 16.800 8 17.300 13"/><circle cx="5.200" cy="13.300" r="2.800"/><path d="M0.700 20.600C1.200 15.800 9.200 15.800 9.700 20.600"/></svg>
<svg class="a" style="left:1699px;top:1048px" width="18" height="12" viewBox="0 0 18 12" fill="none" stroke="#fff" stroke-width="1.500"><path d="M1 10.500L9 2.500L17 10.500"/></svg>
<div class="t" style="left:1732px;top:1047px;color:#fff;font-size:14.5px;letter-spacing:-0.6px;font-family:'Liberation Sans',sans-serif;font-stretch:normal">РУС</div>
<div class="t" style="left:1771px;width:80px;text-align:center;top:1034px;color:#fff;font-size:14px;font-family:'Liberation Sans',sans-serif;font-stretch:normal;line-height:20px;height:20px">8:34:40</div>
<div class="t" style="left:1771px;width:80px;text-align:center;top:1058px;color:#fff;font-size:14px;font-family:'Liberation Sans',sans-serif;font-stretch:normal;line-height:20px;height:20px">17.02.2024</div>
<svg class="a" style="left:1868px;top:1044px" width="22" height="22" viewBox="0 0 22 22" fill="none" stroke="#fff" stroke-width="1.400"><path d="M1.500 1.500H20.500V16.500H13.500L11 19.500L8.500 16.500H1.500Z"/></svg>
<div class="a" style="left:1914px;top:1030px;width:1px;height:50px;background:#5a5a5a"></div>
</body></html>
